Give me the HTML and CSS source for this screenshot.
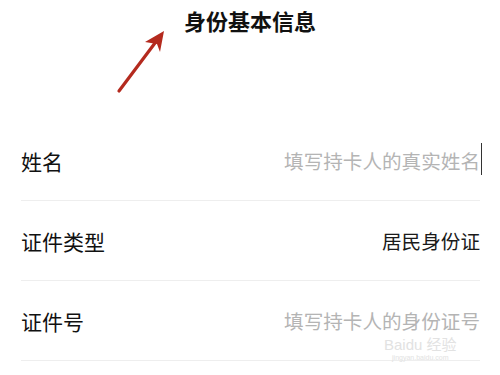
FILE: index.html
```html
<!DOCTYPE html>
<html>
<head>
  <meta charset="UTF-8" />
  <title>身份基本信息</title>
  <link rel="stylesheet" href="styles.css">
</head>
<body>
  <div class="page">
    <div class="header">
      <svg class="arrow" width="60" height="70" viewBox="0 0 60 70">
        <line x1="5" y1="64" x2="44" y2="12" stroke="#b42a1e" stroke-width="3.2" stroke-linecap="round" />
        <polygon points="50,4 46,25 43,17 31,15" fill="#b42a1e" />
      </svg>
      <h1>身份基本信息</h1>
    </div>

    <div class="form">
      <div class="row">
        <span class="label">姓名</span>
        <span class="value placeholder">填写持卡人的真实姓名<i class="cursor"></i></span>
      </div>
      <div class="row">
        <span class="label">证件类型</span>
        <span class="value">居民身份证</span>
      </div>
      <div class="row">
        <span class="label">证件号</span>
        <span class="value placeholder">填写持卡人的身份证号</span>
      </div>
    </div>

    <div class="watermark">
      <span class="wm-logo">Baidu 经验</span>
      <span class="wm-url">jingyan.baidu.com</span>
    </div>
  </div>
</body>
</html>
```

FILE: styles.css
```css
* {
  margin: 0;
  padding: 0;
  box-sizing: border-box;
}

body {
  font-family: "Noto Sans CJK SC", "Noto Sans", sans-serif;
  background-color: #ffffff;
  color: #111111;
}

.page {
  position: relative;
  width: 500px;
  height: 375px;
  overflow: hidden;
}

.header {
  position: relative;
  height: 121px;
  text-align: center;
}

.header h1 {
  padding-top: 3px;
  font-size: 22px;
  font-weight: 700;
  line-height: 34px;
  color: #111111;
}

.arrow {
  position: absolute;
  left: 114px;
  top: 27px;
}

.form {
  padding: 0 20px 0 21px;
}

.row {
  display: flex;
  align-items: center;
  justify-content: space-between;
  height: 80px;
  border-bottom: 1px solid #eeeeee;
}

.label {
  font-size: 21px;
  color: #111111;
}

.value {
  position: relative;
  font-size: 19.6px;
  color: #1a1a1a;
}

.placeholder {
  color: #b4b4b4;
}

.cursor {
  position: absolute;
  right: -2px;
  top: -3px;
  width: 1.5px;
  height: 32px;
  background-color: #333333;
}

.watermark {
  position: absolute;
  left: 384px;
  top: 337px;
  display: flex;
  flex-direction: column;
  align-items: center;
  color: #e2e2e2;
  font-family: "Liberation Sans", "Noto Sans CJK SC", sans-serif;
}

.wm-logo {
  font-size: 15px;
  line-height: 15px;
}

.wm-url {
  font-size: 7px;
  line-height: 11px;
}
```
